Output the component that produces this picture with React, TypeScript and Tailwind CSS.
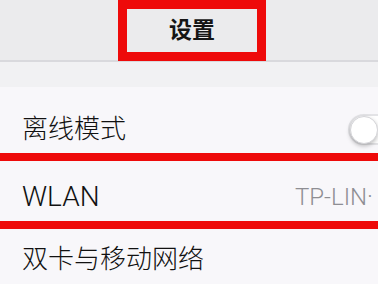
export default function App() {
  return (
    <div
      className="w-[378px] h-[284px] overflow-hidden bg-[#f8f7fa] text-[#111]"
      style={{ fontFamily: 'Roboto, "Noto Sans CJK SC", sans-serif' }}
    >
      {/* Header with annotation box around the title */}
      <header className="h-[62px] bg-[#ebebed] border-b-2 border-[#d9d9dd] flex">
        <div className="ml-[118px] w-[148px] h-[61px] border-[9px] border-[#ee0a0a] flex items-center justify-center">
          <span className="text-[23px] leading-none font-semibold text-[#151515]">设置</span>
        </div>
      </header>

      {/* Gap between header and list */}
      <div className="h-[25px] bg-[#f1f1f3]" />

      {/* Settings list */}
      <div className="h-[66px] flex items-start justify-between overflow-hidden pl-[22px] pt-[29px]">
        <span className="text-[26px] leading-none font-light">离线模式</span>
        <div className="-mt-[2px] mr-[-24px] w-[54px] h-[31px] rounded-full border-2 border-[#e3e3e6] bg-white flex items-center">
          <div className="w-[28px] h-[28px] rounded-full bg-white border border-[#d4d4d8] shadow-[0_2px_4px_rgba(0,0,0,0.25)]" />
        </div>
      </div>
      <div className="h-[8px] bg-[#ee0a0a]" />

      <div className="h-[60px] flex items-start overflow-hidden pl-[22px] pt-[22px]">
        <span className="text-[28px] leading-none font-light">WLAN</span>
        <span className="ml-auto w-[83px] text-[24px] leading-none font-light text-[#8e8e93] whitespace-nowrap pt-[2px]">
          TP-LIN·
        </span>
      </div>
      <div className="h-[8px] bg-[#ee0a0a]" />

      <div className="h-[60px] flex items-start pl-[22px] pt-[17px]">
        <span className="text-[26px] leading-none font-light">双卡与移动网络</span>
      </div>
    </div>
  );
}
